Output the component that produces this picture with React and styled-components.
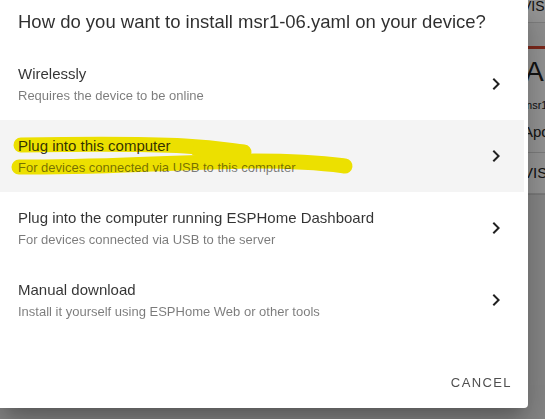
import React from 'react'
import styled, { createGlobalStyle } from 'styled-components'

const GlobalStyle = createGlobalStyle`
    html, body {
        margin: 0;
        padding: 0;
        background: #e4e4e4;
        font-family: "Liberation Sans", Arial, sans-serif;
    }
`

const options = [
    { title: 'Wirelessly', sub: 'Requires the device to be online' },
    { title: 'Plug into this computer', sub: 'For devices connected via USB to this computer', active: true },
    { title: 'Plug into the computer running ESPHome Dashboard', sub: 'For devices connected via USB to the server' },
    { title: 'Manual download', sub: 'Install it yourself using ESPHome Web or other tools' },
]

// the dashboard behind the dialog
const Page = styled.div`
    min-height: 419px;
    padding-left: 521px;
    overflow: hidden;
`
const Card = styled.div`
    width: 240px;
    background: #fdfdfd;
    color: #222;
`
const CardTop = styled.div`
    height: 22px;
    border-bottom: 1px solid #d6d6d6;
    font-size: 14px;
    line-height: 12px;
    padding-left: 1px;
`
const CardGap = styled.div`
    height: 23px;
    background: #f3f3f3;
    border-bottom: 3px solid #d4452f;
`
const CardName = styled.div`
    font-size: 28px;
    line-height: 32px;
    padding-top: 7px;
    padding-left: 4px;
`
const CardSub = styled.div`
    font-size: 11px;
    line-height: 14px;
    padding: 10px 0 0 2px;
`
const CardRow = styled.div`
    font-size: 15px;
    height: 40px;
    line-height: 40px;
    border-bottom: 1px solid #d6d6d6;
    padding-left: 2px;
`
const CardBottom = styled.div`
    height: 190px;
    background: #e6e6e6;
    border-top: 1px solid #cfcfcf;
`

const Scrim = styled.div`
    position: fixed;
    inset: 0;
    background: rgba(0, 0, 0, 0.4);
`

const Dialog = styled.div`
    position: fixed;
    top: 0;
    left: 0;
    width: 528px;
    background: #fff;
    border-radius: 0 0 4px 0;
    box-shadow: 0 11px 15px -7px rgba(0,0,0,0.2), 0 24px 38px 3px rgba(0,0,0,0.14), 0 9px 46px 8px rgba(0,0,0,0.12);
`
const Title = styled.h2`
    margin: 0;
    padding: 8px 18px 12px;
    font-size: 18.5px;
    font-weight: 400;
    line-height: 28px;
    color: rgba(0, 0, 0, 0.82);
    white-space: nowrap;
`
const List = styled.div`
    padding-bottom: 20px;
`
const Item = styled.div`
    position: relative;
    height: 72px;
    display: flex;
    align-items: center;
    padding: 0 20px 0 18px;
    background: ${props => props.active ? 'linear-gradient(to right, #f4f4f4 524px, #fff 524px)' : 'transparent'};
    cursor: pointer;
`
const ItemText = styled.div`
    flex: 1;
    display: flex;
    flex-direction: column;
`
const Primary = styled.span`
    font-size: 15px;
    line-height: 23px;
    color: rgba(0, 0, 0, 0.8);
`
const Secondary = styled.span`
    font-size: 13px;
    line-height: 21px;
    color: rgba(0, 0, 0, 0.52);
`
const Chevron = styled.svg`
    width: 24px;
    height: 24px;
    fill: #212121;
`
const Scribble = styled.svg`
    position: absolute;
    left: 0;
    top: 0;
    width: 400px;
    height: 72px;
    mix-blend-mode: multiply;
    pointer-events: none;
`
const Actions = styled.div`
    display: flex;
    justify-content: flex-end;
    padding: 8px;
`
const Button = styled.button`
    height: 36px;
    padding: 0 8px;
    border: none;
    background: transparent;
    font-family: "Liberation Sans", Arial, sans-serif;
    font-size: 13px;
    font-weight: 400;
    letter-spacing: 1.4px;
    text-transform: uppercase;
    color: #4f4f4f;
    cursor: pointer;
`

export default function App() {
    return (
        <>
            <GlobalStyle />
            <Page>
                <Card>
                    <CardTop>VIS</CardTop>
                    <CardGap />
                    <CardName>Ap</CardName>
                    <CardSub>msr1</CardSub>
                    <CardRow>Apo</CardRow>
                    <CardRow>VIS</CardRow>
                    <CardBottom />
                </Card>
            </Page>
            <Scrim />
            <Dialog>
                <Title>How do you want to install msr1-06.yaml on your device?</Title>
                <List>
                    {options.map((o) => (
                        <Item key={o.title} active={o.active}>
                            <ItemText>
                                <Primary>{o.title}</Primary>
                                <Secondary>{o.sub}</Secondary>
                            </ItemText>
                            <Chevron viewBox="0 0 24 24">
                                <path d="M10 6L8.59 7.41 13.17 12l-4.58 4.59L10 18l6-6z" />
                            </Chevron>
                            {o.active && (
                                <Scribble viewBox="0 0 400 72">
                                    <g fill="none" stroke="#f7ea00" strokeLinecap="round" strokeLinejoin="round">
                                        <path d="M21 25 C 80 24, 150 24, 185 26 S 232 31, 244 32" strokeWidth="15" />
                                        <path d="M19 47 C 100 48, 200 41, 255 41 S 330 44, 345 46" strokeWidth="15" />
                                        <path d="M195 31 C 225 35, 240 37, 250 40" strokeWidth="9" />
                                    </g>
                                </Scribble>
                            )}
                        </Item>
                    ))}
                </List>
                <Actions>
                    <Button>Cancel</Button>
                </Actions>
            </Dialog>
        </>
    )
}
